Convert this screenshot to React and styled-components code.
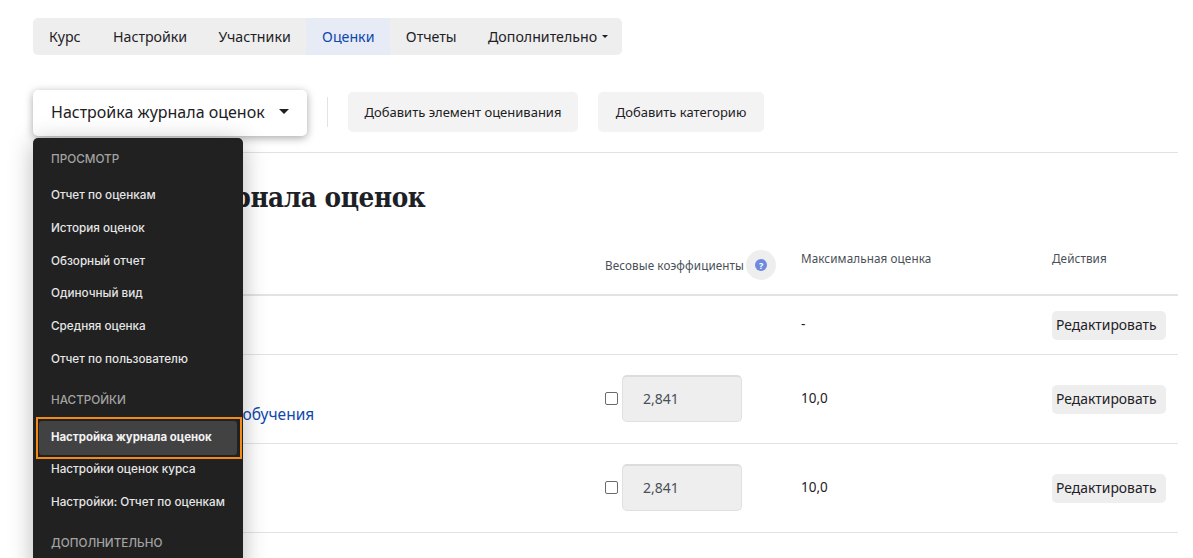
import React from "react";
import styled, { createGlobalStyle } from "styled-components";

const GlobalStyle = createGlobalStyle`
    html, body {
        margin: 0;
        padding: 0;
        background: #fff;
    }
    body {
        font-family: "Noto Sans", "Open Sans", sans-serif;
        color: #1d2125;
    }
`;

const Page = styled.div`
    position: relative;
    width: 1193px;
    height: 558px;
    overflow: hidden;
    box-sizing: border-box;
    padding: 18px 15px 0 33px;
`;

const Nav = styled.nav`
    display: inline-flex;
    height: 37px;
    background: #eeeeee;
    border-radius: 5px;
    padding: 0;
`;

const NavItem = styled.a`
    display: flex;
    align-items: center;
    gap: 5px;
    padding: 0 ${({$last, $first}) => ($last ? "14px" : $first ? "16.7px" : "15.7px")} 0 ${({$first}) => ($first ? "16px" : "15.7px")};
    font-size: 14.2px;
    color: ${({$active}) => ($active ? "#0f47ad" : "#1d2125")};
    background: ${({$active}) => ($active ? "#e6ebf6" : "transparent")};
`;

const Caret = styled.span`
    display: inline-block;
    width: 0;
    height: 0;
    border-left: ${({$size}) => $size}px solid transparent;
    border-right: ${({$size}) => $size}px solid transparent;
    border-top: ${({$size}) => $size}px solid ${({$color}) => $color || "#1d2125"};
`;

const ActionBar = styled.div`
    display: flex;
    align-items: center;
    height: 46px;
    margin-top: 35px;
    padding-bottom: 16px;
    border-bottom: 1px solid #dee2e6;
`;

const Selector = styled.div`
    display: flex;
    align-items: center;
    justify-content: space-between;
    box-sizing: border-box;
    width: 274px;
    height: 46px;
    padding: 0 18px 3px;
    background: #fff;
    border-radius: 5px;
    font-size: 16px;
    box-shadow: 0 2px 8px rgba(0, 0, 0, 0.35);
`;

const Divider = styled.div`
    width: 1px;
    height: 30px;
    margin: 0 20px 2px;
    background: #e3e3e3;
`;

const ActionButton = styled.button`
    height: 40px;
    width: ${({$width}) => $width}px;
    margin: 0 20px 2px 0;
    border: 0;
    border-radius: 5px;
    background: #f3f3f3;
    font-family: inherit;
    font-size: 13px;
    color: #1d2125;
    padding: 0 0 1px;
`;

const Heading = styled.h2`
    margin: 27px 0 0;
    height: 35px;
    line-height: 35px;
    font-family: "DejaVu Serif Condensed", "DejaVu Serif", serif;
    font-stretch: condensed;
    font-size: 27.5px;
    font-weight: 700;
    letter-spacing: -0.4px;
    color: #1d2125;
`;

const Row = styled.div`
    display: grid;
    grid-template-columns: 572px 196px 251px 126px;
    align-items: center;
    box-sizing: border-box;
    width: 1145px;
    height: ${({$height}) => $height}px;
    border-bottom: ${({$thick}) => ($thick ? "2px solid #e3e3e3" : "1px solid #e3e3e3")};
`;

const HeadRow = styled(Row)`
    margin-top: 22px;
    align-items: start;
`;

const HeadCell = styled.div`
    display: flex;
    align-items: center;
    font-size: 11.7px;
    color: #495057;
    letter-spacing: 0.1px;
    padding-top: 13px;
`;

const HelpWrap = styled.span`
    display: flex;
    align-items: center;
    justify-content: center;
    width: 30px;
    height: 30px;
    margin-left: 2px;
    border-radius: 50%;
    background: #eeeeee;
`;

const HelpDot = styled.span`
    display: flex;
    align-items: center;
    justify-content: center;
    width: 12px;
    height: 12px;
    border-radius: 50%;
    background: #6e8ade;
    color: #fff;
    font-size: 9px;
    font-weight: 700;
`;

const NameCell = styled.div`
    padding-left: 122px;
    padding-top: 30px;
    font-size: 15.5px;
    color: #0f47ad;
    white-space: nowrap;
`;

const WeightCell = styled.div`
    display: flex;
    align-items: center;
    gap: 4px;
    margin-bottom: 2px;
`;

const Check = styled.input`
    appearance: none;
    box-sizing: border-box;
    width: 13px;
    height: 13px;
    margin: 0;
    border: 1px solid #6b6b6b;
    border-radius: 2px;
    background: #fff;
`;

const WeightBox = styled.div`
    display: flex;
    align-items: center;
    box-sizing: border-box;
    width: 120px;
    height: 47px;
    padding-left: 20px;
    background: #eeeeee;
    border: 1px solid #e0e0e0;
    border-top: 2px solid #dcdcdc;
    border-radius: 5px;
    font-size: 14px;
    color: #495057;
`;

const Value = styled.div`
    font-size: 13.5px;
    padding-bottom: 2px;
    color: #1d2125;
`;

const EditButton = styled.button`
    width: 114px;
    height: 29px;
    border: 0;
    border-radius: 5px;
    background: #eeeeee;
    font-family: inherit;
    font-size: 13.9px;
    color: #1d2125;
    text-align: left;
    padding: 0 0 2px 4px;
`;

const Menu = styled.div`
    position: absolute;
    left: 33px;
    top: 138px;
    box-sizing: border-box;
    width: 210px;
    height: 440px;
    padding-top: 5px;
    background: #212121;
    border-radius: 5px;
    box-shadow: 0 4px 24px rgba(0, 0, 0, 0.28);
    font-family: Inter, "Noto Sans", sans-serif;
`;

const MenuLabel = styled.div`
    box-sizing: border-box;
    height: 33px;
    margin-top: ${({$top}) => $top || 0}px;
    margin-bottom: ${({$bottom}) => $bottom || 0}px;
    padding-left: 18px;
    line-height: 33px;
    font-size: 11.7px;
    font-weight: 500;
    color: #a3a3a3;
`;

const MenuItem = styled.div`
    box-sizing: border-box;
    height: 32.8px;
    padding-left: 18px;
    line-height: 32.8px;
    font-size: 11.7px;
    font-weight: 500;
    color: #e6e6e6;
    white-space: nowrap;
`;

const ActiveItem = styled.div`
    box-sizing: border-box;
    height: 42px;
    width: 206px;
    margin: 0.5px 0 -6px 3px;
    border: 2px solid #f28a14;
    padding: 2px 3px 2px 1px;
`;

const ActiveInner = styled.div`
    height: 100%;
    padding-left: 12px;
    line-height: 32px;
    border-radius: 3px;
    background: #424242;
    font-size: 11.4px;
    font-weight: 700;
    color: #f2f2f2;
    white-space: nowrap;
`;

const rows = [
    { id: 2, link: "Результаты обучения" },
    { id: 3, link: "" },
];

export default function App() {
    return (
        <Page>
            <GlobalStyle />
            <Nav>
                <NavItem $first>Курс</NavItem>
                <NavItem>Настройки</NavItem>
                <NavItem>Участники</NavItem>
                <NavItem $active>Оценки</NavItem>
                <NavItem>Отчеты</NavItem>
                <NavItem $last>Дополнительно <Caret $size={3} /></NavItem>
            </Nav>
            <ActionBar>
                <Selector>Настройка журнала оценок <Caret $size={5} /></Selector>
                <Divider />
                <ActionButton $width={230}>Добавить элемент оценивания</ActionButton>
                <ActionButton $width={166}>Добавить категорию</ActionButton>
            </ActionBar>
            <Heading>Настройка журнала оценок</Heading>
            <HeadRow $height={59} $thick>
                <div />
                <HeadCell>
                    Весовые коэффициенты
                    <HelpWrap><HelpDot>?</HelpDot></HelpWrap>
                </HeadCell>
                <HeadCell>Максимальная оценка</HeadCell>
                <HeadCell>Действия</HeadCell>
            </HeadRow>
            <Row $height={59}>
                <div />
                <div />
                <Value>-</Value>
                <EditButton>Редактировать</EditButton>
            </Row>
            {rows.map((row) => (
                <Row key={row.id} $height={89}>
                    <NameCell>{row.link}</NameCell>
                    <WeightCell>
                        <Check type="checkbox" />
                        <WeightBox>2,841</WeightBox>
                    </WeightCell>
                    <Value>10,0</Value>
                    <EditButton>Редактировать</EditButton>
                </Row>
            ))}
            <Menu>
                <MenuLabel $bottom={3}>ПРОСМОТР</MenuLabel>
                <MenuItem>Отчет по оценкам</MenuItem>
                <MenuItem>История оценок</MenuItem>
                <MenuItem>Обзорный отчет</MenuItem>
                <MenuItem>Одиночный вид</MenuItem>
                <MenuItem>Средняя оценка</MenuItem>
                <MenuItem>Отчет по пользователю</MenuItem>
                <MenuLabel $top={8}>НАСТРОЙКИ</MenuLabel>
                <ActiveItem><ActiveInner>Настройка журнала оценок</ActiveInner></ActiveItem>
                <MenuItem>Настройки оценок курса</MenuItem>
                <MenuItem>Настройки: Отчет по оценкам</MenuItem>
                <MenuLabel $top={8}>ДОПОЛНИТЕЛЬНО</MenuLabel>
            </Menu>
        </Page>
    );
}
